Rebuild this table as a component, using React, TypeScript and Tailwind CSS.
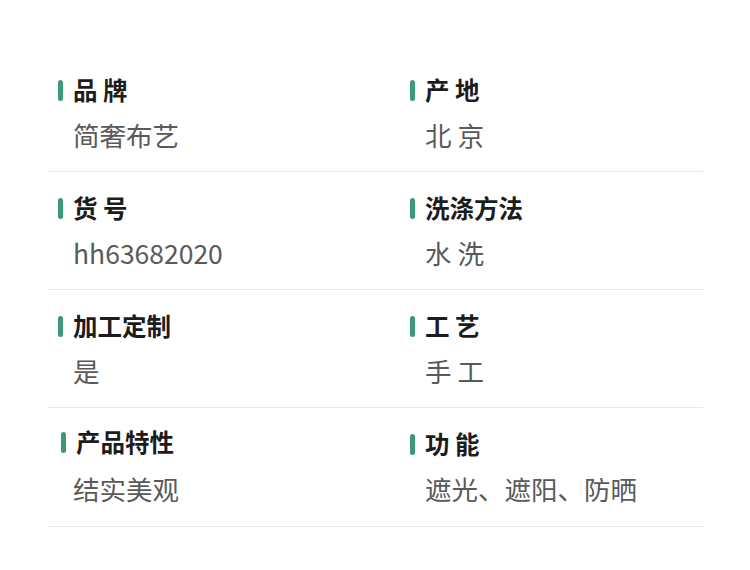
import React from "react";

type Item = { label: string; value: string; shift?: boolean };

const rows: [Item, Item][] = [
  [
    { label: "品 牌", value: "简奢布艺" },
    { label: "产 地", value: "北 京" },
  ],
  [
    { label: "货 号", value: "hh63682020" },
    { label: "洗涤方法", value: "水 洗" },
  ],
  [
    { label: "加工定制", value: "是" },
    { label: "工 艺", value: "手 工" },
  ],
  [
    { label: "产品特性", value: "结实美观", shift: true },
    { label: "功 能", value: "遮光、遮阳、防晒" },
  ],
];

function Cell({ item }: { item: Item }) {
  return (
    <div className="flex flex-col pt-[21px]">
      <div
        className={
          item.shift
            ? "flex items-center h-[30px] pl-[13px] -mt-[2px] mb-[2px]"
            : "flex items-center h-[30px] pl-[10px]"
        }
      >
        <span className="w-[5px] h-[21px] rounded-full bg-[#3b9a76]" />
        <span className="ml-[10px] text-[24.5px] leading-[30px] font-bold text-[#1c1c1c] whitespace-pre">
          {item.label}
        </span>
      </div>
      <div className="mt-[12px] pl-[25px] text-[26.5px] leading-[36px] text-[#5a5a5a] whitespace-pre">
        {item.value}
      </div>
    </div>
  );
}

export default function App() {
  return (
    <div
      className="w-[750px] h-[570px] bg-white pt-[54px]"
      style={{ fontFamily: '"Noto Sans CJK SC", "Noto Sans", sans-serif' }}
    >
      <div className="ml-[48px] w-[655px]">
        {rows.map((r, i) => (
          <div
            key={i}
            className={
              i === 3
                ? "grid grid-cols-[352px_1fr] h-[119px] border-b border-[#e3ebe8]"
                : "grid grid-cols-[352px_1fr] h-[118px] border-b border-[#e3ebe8]"
            }
          >
            <Cell item={r[0]} />
            <Cell item={r[1]} />
          </div>
        ))}
      </div>
    </div>
  );
}
